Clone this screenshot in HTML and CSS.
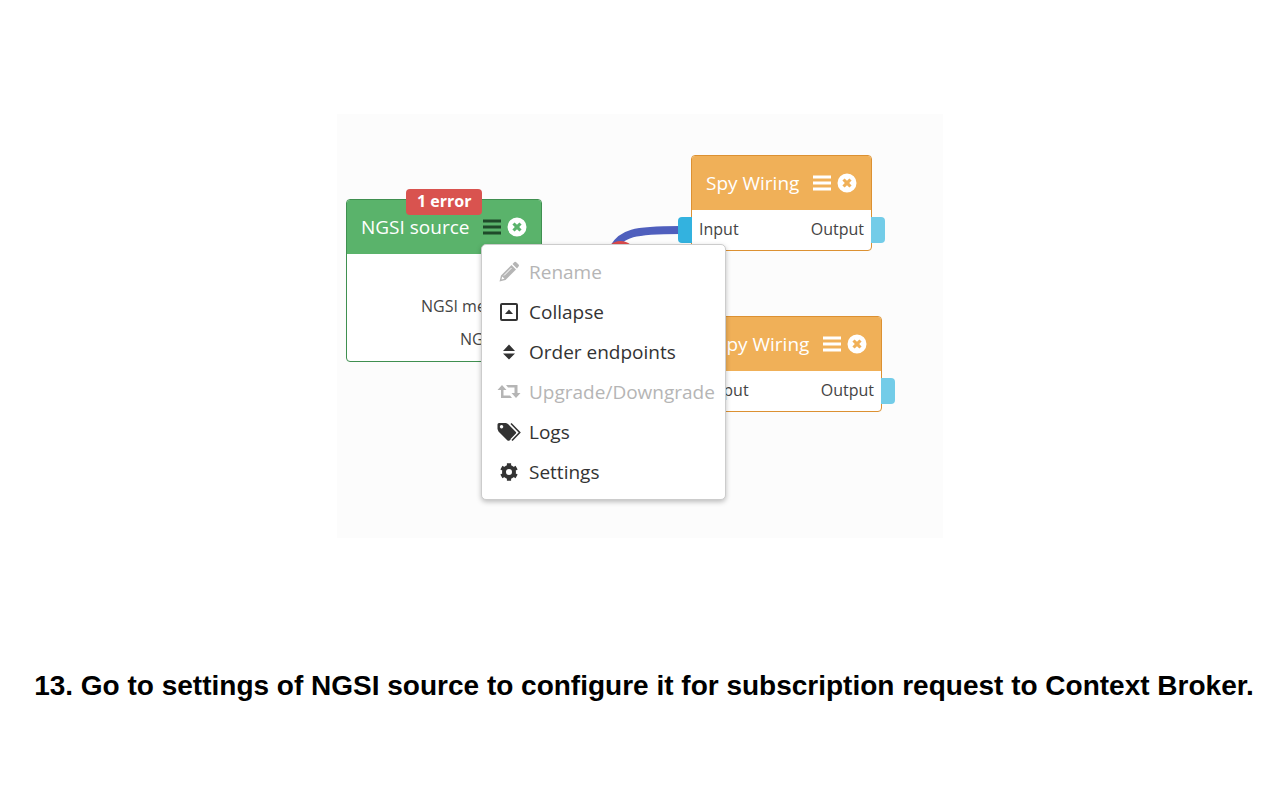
FILE: index.html
```html
<!DOCTYPE html>
<html lang="en">
<head>
<meta charset="utf-8">
<title>Wiring editor</title>
<link rel="stylesheet" href="styles.css">
</head>
<body>
<svg class="symbols" aria-hidden="true">
  <symbol id="bars" viewBox="0 0 18 16"><path d="M0 2h18M0 8h18M0 14h18" fill="none" stroke="currentColor" stroke-width="3"/></symbol>
  <symbol id="close" viewBox="0 0 20 20"><path fill="currentColor" fill-rule="evenodd" d="M10 .5a9.500 9.500 0 1 1 0 19a9.500 9.500 0 1 1 0-19zM7.600 5.400L5.400 7.600L7.800 10L5.400 12.400L7.600 14.600L10 12.200L12.400 14.600L14.600 12.400L12.200 10L14.600 7.600L12.400 5.400L10 7.800z"/></symbol>
</svg>
<main class="page">
  <section class="canvas">
    <svg class="wire" viewBox="0 0 70 24" aria-hidden="true">
      <path d="M3 27C11 11 24 8 70 8" fill="none" stroke="#4f5fbd" stroke-width="8"/>
      <ellipse cx="10.500" cy="31" rx="14" ry="12" fill="#dd4b4b"/>
    </svg>

    <article class="node source">
      <span class="badge">1 error</span>
      <header class="head"><span class="title">NGSI source</span>
        <button class="tool dark" aria-label="Menu"><svg class="bars"><use href="#bars"/></svg></button>
        <button class="tool" aria-label="Remove"><svg class="close"><use href="#close"/></svg></button>
      </header>
      <div class="outputs"><span>NGSI me</span><span>NG</span></div>
    </article>

    <article class="node spy first">
      <header class="head"><span class="title">Spy Wiring</span>
        <button class="tool" aria-label="Menu"><svg class="bars"><use href="#bars"/></svg></button>
        <button class="tool" aria-label="Remove"><svg class="close"><use href="#close"/></svg></button>
      </header>
      <div class="ports"><span>Input</span><span>Output</span></div>
      <i class="anchor in"></i><i class="anchor out"></i>
    </article>

    <article class="node spy second">
      <header class="head"><span class="title">Spy Wiring</span>
        <button class="tool" aria-label="Menu"><svg class="bars"><use href="#bars"/></svg></button>
        <button class="tool" aria-label="Remove"><svg class="close"><use href="#close"/></svg></button>
      </header>
      <div class="ports"><span>Input</span><span>Output</span></div>
      <i class="anchor in"></i><i class="anchor out"></i>
    </article>

    <div class="menu" role="menu">
      <button class="item" role="menuitem" disabled><svg class="icon" viewBox="0 0 24 24"><path fill="currentColor" fill-rule="evenodd" d="M2.500 21.500L4 15.500L14.500 5L19 9.500L8.500 20zM5.200 16.500L4.500 19.500L7.500 18.800zM15.500 4L17.500 2Q18.500 1.500 19.500 2.500L21.500 4.500Q22.500 5.500 21.500 6.500L20 8.500z"/><path d="M7 15.500L14.500 8" stroke="#fff" stroke-width="1"/></svg><span>Rename</span></button>
      <button class="item" role="menuitem"><svg class="icon" viewBox="0 0 24 24"><rect x="4" y="4" width="16" height="16" rx="1" fill="none" stroke="currentColor" stroke-width="2"/><path fill="currentColor" d="M8 14L12 9.500L16 14z"/></svg><span>Collapse</span></button>
      <button class="item" role="menuitem"><svg class="icon" viewBox="0 0 24 24"><path fill="currentColor" d="M6 11L12 4.500L18 11zM6 13.500L12 19.500L18 13.500z"/></svg><span>Order endpoints</span></button>
      <button class="item" role="menuitem" disabled><svg class="icon" viewBox="0 0 24 24"><path fill="currentColor" d="M5 5L9.500 10H6.500V15.500H13L15 18H4V10H.5zM9 5H20.500V13H23.500L19 18L14.500 13H17.500V7.500H11z"/></svg><span>Upgrade/Downgrade</span></button>
      <button class="item" role="menuitem"><svg class="icon" viewBox="0 0 24 24"><path fill="currentColor" fill-rule="evenodd" d="M2 3H9L11 4L19 12Q19.500 13 19 14L12.500 20.500Q11.500 21 10.500 20.500L1.500 11.500L.5 9V4.500Q.5 3 2 3zM4.500 5A1.700 1.700 0 1 0 4.600 5z"/><path d="M14 3.500L22.700 12.500L15 20.500" fill="none" stroke="#fff" stroke-width="4"/><path d="M14 3.500L22.700 12.500L15 20.500" fill="none" stroke="currentColor" stroke-width="1.600"/></svg><span>Logs</span></button>
      <button class="item" role="menuitem"><svg class="icon" viewBox="0 0 24 24"><circle cx="12" cy="12" r="5" fill="none" stroke="currentColor" stroke-width="4"/><path d="M12 3.200V6.500M12 17.500V20.800M4.400 7.600L7.200 9.200M16.800 14.800L19.600 16.400M4.400 16.400L7.200 14.800M16.800 9.200L19.600 7.600" stroke="currentColor" stroke-width="4.200"/></svg><span>Settings</span></button>
    </div>
  </section>
  <h1 class="caption">13. Go to settings of NGSI source to configure it for subscription request to Context Broker.</h1>
</main>
</body>
</html>
```
FILE: styles.css
```css
* { box-sizing: border-box; }
body { margin: 0; background: #fff; }
.symbols { display: none; }
.page {
  display: flex;
  flex-direction: column;
  align-items: center;
  padding: 114px 12px 32px;
  gap: 132px;
}
.canvas {
  position: relative;
  width: 100%;
  max-width: 606px;
  height: 424px;
  background: #fcfcfc;
  font-family: "Open Sans", "Noto Sans", sans-serif;
}
.wire { position: absolute; left: 273px; top: 108px; width: 70px; height: 24px; }
.node {
  position: absolute;
  display: flex;
  flex-direction: column;
  background: #fff;
  border: 1px solid;
  border-radius: 4px;
  font-size: 16px;
  color: #444;
}
.source { left: 9px; top: 85px; width: 196px; height: 163px; border-color: #3f8f50; }
.spy { width: 181px; height: 96px; border-color: #dc9132; }
.first { left: 354px; top: 41px; }
.second { left: 364px; top: 202px; }
.head {
  display: flex;
  align-items: center;
  height: 54px;
  padding: 0 14px;
  color: #fff;
  font-size: 19px;
  border-radius: 3px 3px 0 0;
}
.source .head { background: #5ab36b; }
.spy .head { background: #f0b058; }
.title { flex: 1; white-space: nowrap; }
.tool { display: flex; padding: 0; margin-left: 6px; border: 0; background: none; color: #fff; }
.dark { color: #1f4a2a; }
.bars { width: 18px; height: 16px; }
.close { width: 20px; height: 20px; }
.badge {
  position: absolute;
  left: 59px;
  top: -11px;
  padding: 0 11px 1px;
  border-radius: 4px;
  background: #d9534f;
  color: #fff;
  font-size: 16px;
  font-weight: 700;
  line-height: 25px;
}
.outputs {
  display: flex;
  flex-direction: column;
  padding: 36px 0 0 74px;
  line-height: 33px;
  white-space: nowrap;
  overflow: hidden;
}
.outputs span + span { padding-left: 39px; }
.ports { display: flex; justify-content: space-between; padding: 0 7px; line-height: 39px; }
.anchor { position: absolute; top: 61px; width: 14px; height: 26px; }
.in { right: 100%; background: #33b2df; border-radius: 4px 0 0 4px; }
.out { left: 100%; background: #73cce8; border-radius: 0 4px 4px 0; }
.menu {
  position: absolute;
  left: 144px;
  top: 130px;
  width: 245px;
  padding: 7px 0;
  background: #fff;
  border: 1px solid #ccc;
  border-radius: 5px;
  box-shadow: 0 2px 5px rgba(0, 0, 0, 0.25);
}
.item {
  display: flex;
  align-items: center;
  gap: 8px;
  width: 100%;
  height: 40px;
  padding: 0 0 0 15px;
  border: 0;
  background: none;
  color: #333;
  font-family: inherit;
  font-size: 19px;
  white-space: nowrap;
}
.item:disabled { color: #b5b5b5; }
.icon { width: 24px; height: 24px; }
.caption {
  margin: 0;
  padding-left: 8px;
  color: #000;
  font-family: "Liberation Sans", Arial, sans-serif;
  font-size: 28px;
  font-weight: 700;
  line-height: 32px;
}
```
